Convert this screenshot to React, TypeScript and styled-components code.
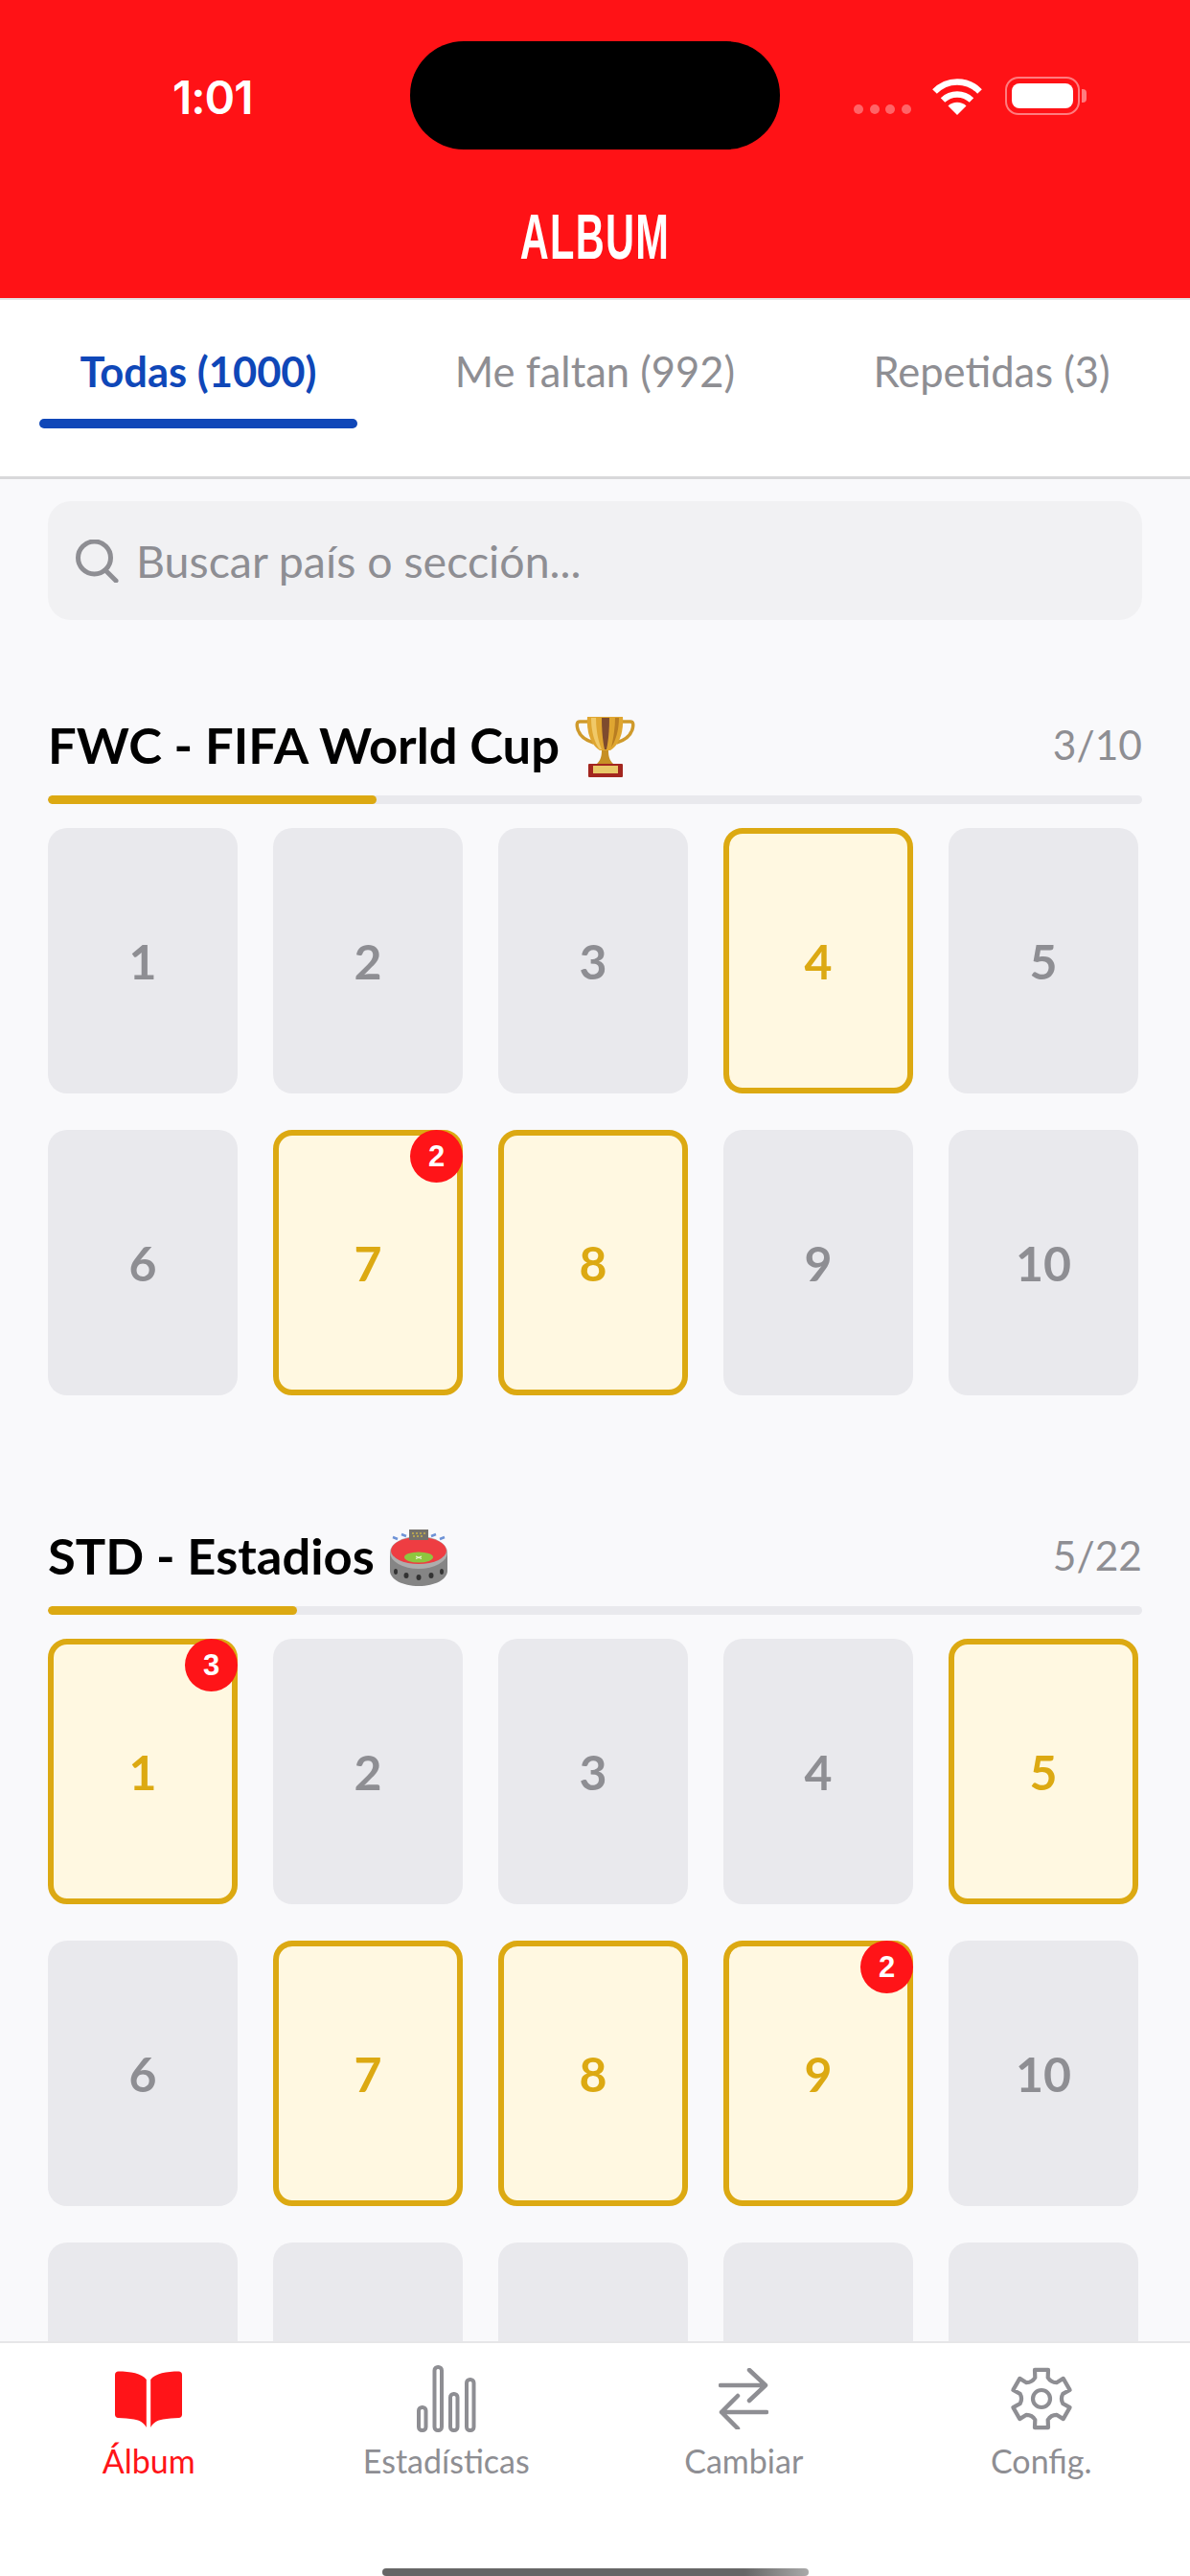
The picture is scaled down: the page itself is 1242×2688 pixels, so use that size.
import React from 'react'
import styled, { createGlobalStyle } from 'styled-components'

const GlobalStyle = createGlobalStyle`
  html, body { margin: 0; padding: 0; background: #fff; }
  * { box-sizing: border-box; }
`

const owned: Record<string, Record<number, number>> = {
  fwc: { 4: 0, 7: 2, 8: 0 },
  std: { 1: 3, 5: 0, 7: 0, 8: 0, 9: 2 },
}

// tiles: what gets drawn before the tab bar covers the list
const sections = [
  { id: 'fwc', title: 'FWC - FIFA World Cup', total: 10, got: 3, tiles: 10, icon: 'trophy' },
  { id: 'std', title: 'STD - Estadios', total: 22, got: 5, tiles: 15, icon: 'stadium' },
]

function Trophy() {
  return (
    <svg width="63" height="64" viewBox="0 0 63 64">
      <path d="M15 6H5C2 6 2 9 2.500 12c1.500 8 7 13 17 16" fill="none" stroke="#cf9a2c" strokeWidth="3.500" />
      <path d="M48 6h10c3 0 3 3 2.500 6-1.500 8-7 13-17 16" fill="none" stroke="#cf9a2c" strokeWidth="3.500" />
      <path d="M13 1h37c1 15-3 29-13 35H26C16 30 12 16 13 1z" fill="#dfa631" />
      <path d="M17 2h5c0 12 2 24 6 33h-2C20 28 17 15 17 2z" fill="#f0c968" />
      <path d="M28 2h8c0 13-1 24-3 33h-2c-2-9-3-20-3-33z" fill="#7d4b2e" />
      <path d="M42 2h4c0 12-3 23-8 31 2-9 4-20 4-31z" fill="#b87d22" />
      <path d="M28 36h7c0 6 1 10 5 14H23c4-4 5-8 5-14z" fill="#c68f24" />
      <rect x="14" y="50" width="36" height="14" rx="1" fill="#a3261f" />
      <rect x="19" y="52" width="26" height="8" fill="#e9c868" />
    </svg>
  )
}

function Stadium() {
  return (
    <svg width="60" height="60" viewBox="0 0 60 60">
      <path d="M3 9l5 2M12 6l5 2M43 8l5-2M52 11l5-2" stroke="#6f93d6" strokeWidth="2.500" />
      <path d="M0 24v20c0 9 13 16 30 16s30-7 30-16V24z" fill="#858585" />
      <ellipse cx="30" cy="25" rx="30" ry="17" fill="#adadad" />
      <ellipse cx="30" cy="23" rx="29" ry="14" fill="#ee3d42" />
      <rect x="20" y="1" width="20" height="11" fill="#74716b" />
      <path d="M23 5h14M24 8h12" stroke="#c9b24a" strokeWidth="1.500" strokeDasharray="2 2" />
      <ellipse cx="30" cy="30" rx="15" ry="5.500" fill="#8ec63f" />
      <path d="M27 29l6 2.500M33 29l-6 2.500" stroke="#eef6d5" strokeWidth="1.200" />
      <ellipse cx="6" cy="45" rx="2" ry="3" fill="#333" />
      <ellipse cx="17" cy="49" rx="2.500" ry="3" fill="#333" />
      <ellipse cx="30" cy="51" rx="2.500" ry="3" fill="#333" />
      <ellipse cx="43" cy="49" rx="2.500" ry="3" fill="#333" />
      <ellipse cx="54" cy="45" rx="2" ry="3" fill="#333" />
    </svg>
  )
}

function Wifi() {
  return (
    <svg width="52" height="39" viewBox="0 0 52 39">
      <path d="M2.500 14.500C15.500 1 36.500 1 49.500 14.500" fill="none" stroke="#fff" strokeWidth="6.500" />
      <path d="M11 23.500c8.500-8 21.500-8 30 0" fill="none" stroke="#fff" strokeWidth="6.500" />
      <path d="M26 39l-9.500-9.500c5-5 14-5 19 0z" fill="#fff" />
    </svg>
  )
}

function BookIcon() {
  return (
    <svg width="70" height="59" viewBox="0 0 70 59" fill="#ff1418">
      <path d="M32.800 9v50c-2.500-5-7-7.500-13-8.500-5-.8-11-1.300-16.500-1.500C1.500 49 0 47.500 0 45.500V4C0 2 1.500.5 3.500.5 16 .5 28 2.500 32.800 9z" />
      <path d="M37.200 9v50c2.500-5 7-7.500 13-8.500 5-.8 11-1.300 16.500-1.500 1.800 0 3.300-1.500 3.300-3.500V4c0-2-1.500-3.500-3.500-3.500C54 .5 42 2.500 37.200 9z" />
    </svg>
  )
}

function BarsIcon() {
  return (
    <svg width="62" height="70" viewBox="0 0 62 70" fill="none" stroke="#8e8e93" strokeWidth="4">
      <rect x="2" y="44" width="7.500" height="24" rx="3.500" />
      <rect x="18.500" y="2" width="7.500" height="66" rx="3.500" />
      <rect x="35" y="30" width="7.500" height="38" rx="3.500" />
      <rect x="52" y="15" width="7.500" height="53" rx="3.500" />
    </svg>
  )
}

function SwapIcon() {
  return (
    <svg width="52" height="64" viewBox="0 0 52 64" fill="none" stroke="#8e8e93" strokeWidth="4.500" strokeLinecap="round" strokeLinejoin="round">
      <path d="M2 18h47M32 2l17 16-17 16" />
      <path d="M50 46H3M20 29L3 46l17 17" />
    </svg>
  )
}

// six flat teeth, same outline all round
const gearPath = (() => {
  const pt = (r: number, deg: number) => {
    const a = (deg * Math.PI) / 180
    return `${(33 + r * Math.cos(a)).toFixed(1)} ${(33 + r * Math.sin(a)).toFixed(1)}`
  }
  let d = ''
  for (let i = 0; i < 6; i++) {
    const c = -90 + i * 60
    d += `${i === 0 ? 'M' : 'L'}${pt(23, c - 17)} L${pt(31, c - 13)} L${pt(31, c + 13)} L${pt(23, c + 17)} Q${pt(19.500, c + 30)} ${pt(23, c + 43)} `
  }
  return d + 'Z'
})()

function GearIcon() {
  return (
    <svg width="66" height="66" viewBox="0 0 66 66" fill="none" stroke="#8e8e93" strokeWidth="4.200" strokeLinejoin="round">
      <path d={gearPath} />
      <circle cx="33" cy="33" r="9" />
    </svg>
  )
}

function SearchIcon() {
  return (
    <svg width="45" height="45" viewBox="0 0 45 45" fill="none" stroke="#8e8e93" strokeWidth="5" strokeLinecap="round">
      <circle cx="19.500" cy="19" r="17" />
      <path d="M31 32l11 11" />
    </svg>
  )
}

export default function App() {
  return (
    <Page>
      <GlobalStyle />
      <Header>
        <StatusBar>
          <Time>1:01</Time>
          <Island />
          <StatusIcons>
            <Dots>
              <Dot />
              <Dot />
              <Dot />
              <Dot />
            </Dots>
            <Wifi />
            <Battery>
              <BatteryFill />
            </Battery>
          </StatusIcons>
        </StatusBar>
        <HeaderTitle>
          <span>ALBUM</span>
        </HeaderTitle>
      </Header>

      <Tabs>
        <Tab $active>Todas (1000)</Tab>
        <Tab>Me faltan (992)</Tab>
        <Tab>Repetidas (3)</Tab>
      </Tabs>

      <Content>
        <SearchBox>
          <SearchIcon />
          <SearchText>Buscar país o sección...</SearchText>
        </SearchBox>

        {sections.map((s) => (
          <Section key={s.id}>
            <SectionHead>
              <SectionTitle>
                {s.title}
                {s.icon === 'trophy' ? <Trophy /> : <Stadium />}
              </SectionTitle>
              <Count>
                {s.got}/{s.total}
              </Count>
            </SectionHead>
            <Progress>
              <ProgressFill style={{ width: `${(s.got / s.total) * 100}%` }} />
            </Progress>
            <Grid>
              {Array.from({ length: s.tiles }, (_, i) => i + 1).map((n) => {
                const has = owned[s.id][n] !== undefined
                const extra = owned[s.id][n]
                return (
                  <Sticker key={n} $has={has}>
                    {n <= 10 && n}
                    {extra > 0 && <Badge>{extra}</Badge>}
                  </Sticker>
                )
              })}
            </Grid>
          </Section>
        ))}
      </Content>

      <BottomBar>
        <NavRow>
          <NavItem $active>
            <NavIcon><BookIcon /></NavIcon>
            Álbum
          </NavItem>
          <NavItem>
            <NavIcon><BarsIcon /></NavIcon>
            Estadísticas
          </NavItem>
          <NavItem>
            <NavIcon><SwapIcon /></NavIcon>
            Cambiar
          </NavItem>
          <NavItem>
            <NavIcon><GearIcon /></NavIcon>
            Config.
          </NavItem>
        </NavRow>
        <HomeIndicator />
      </BottomBar>
    </Page>
  )
}

const Page = styled.div`
  width: 1242px;
  height: 2688px;
  display: flex;
  flex-direction: column;
  overflow: hidden;
  background: #f9f9fb;
  font-family: Lato, "Noto Sans", sans-serif;
`

const Header = styled.div`
  height: 311px;
  flex-shrink: 0;
  background: #ff1216;
  display: flex;
  flex-direction: column;
`

const StatusBar = styled.div`
  height: 199px;
  flex-shrink: 0;
  padding-top: 43px;
  display: flex;
  align-items: flex-start;
`

const Time = styled.div`
  width: 428px;
  padding: 30px 0 0 180px;
  font-family: Inter, sans-serif;
  font-weight: 600;
  font-size: 48px;
  line-height: 58px;
  letter-spacing: -1px;
  color: #fff;
`

const Island = styled.div`
  width: 386px;
  height: 113px;
  border-radius: 56px;
  background: #000;
`

const StatusIcons = styled.div`
  display: flex;
  align-items: flex-start;
  margin: 38px 0 0 77px;
`

const Dots = styled.div`
  display: flex;
  gap: 6.5px;
  margin: 28px 22px 0 0;
`

const Dot = styled.div`
  width: 10px;
  height: 10px;
  border-radius: 50%;
  background: rgba(255, 255, 255, 0.35);
`

const Battery = styled.div`
  position: relative;
  width: 78px;
  height: 40px;
  margin: -1px 0 0 24px;
  padding: 5px;
  border: 2px solid rgba(255, 255, 255, 0.45);
  border-radius: 14px;

  &::after {
    content: '';
    position: absolute;
    right: -9px;
    top: 11px;
    width: 5px;
    height: 14px;
    border-radius: 0 4px 4px 0;
    background: rgba(255, 255, 255, 0.45);
  }
`

const BatteryFill = styled.div`
  height: 100%;
  border-radius: 8px;
  background: #fff;
`

const HeaderTitle = styled.div`
  display: flex;
  justify-content: center;
  color: #fff;
  font-family: "Liberation Sans", sans-serif;
  font-weight: 700;
  font-size: 67px;
  line-height: 76px;
  margin-top: 10px;

  span {
    display: inline-block;
    letter-spacing: 2px;
    transform: scaleX(0.62);
  }
`

const Tabs = styled.div`
  height: 189px;
  flex-shrink: 0;
  display: grid;
  grid-template-columns: repeat(3, 1fr);
  padding-top: 2px;
  background: #fff;
  border-top: 2px solid #e4e4e6;
  border-bottom: 3px solid #d8d8da;
`

const Tab = styled.div<{ $active?: boolean }>`
  position: relative;
  text-align: center;
  padding-top: 46px;
  font-size: 43.5px;
  line-height: 52px;
  font-weight: ${(p) => (p.$active ? 700 : 400)};
  color: ${(p) => (p.$active ? '#0f47b8' : '#8e8e93')};

  &::after {
    content: '';
    display: ${(p) => (p.$active ? 'block' : 'none')};
    position: absolute;
    left: 41px;
    right: 41px;
    top: 122px;
    height: 10px;
    border-radius: 5px;
    background: #0f47b8;
  }
`

const Content = styled.div`
  flex: 1;
  min-height: 0;
  overflow: hidden;
  padding: 23px 50px 0;
`

const SearchBox = styled.div`
  height: 124px;
  display: flex;
  align-items: center;
  gap: 18px;
  padding: 0 32px 0 29px;
  border-radius: 24px;
  background: #f1f1f3;
`

const SearchText = styled.div`
  font-size: 46.5px;
  color: #8e8e93;
`

const Section = styled.div`
  margin-top: 100px;

  & + & {
    margin-top: 137px;
  }
`

const SectionHead = styled.div`
  height: 64px;
  padding-bottom: 5px;
  display: flex;
  align-items: center;
  justify-content: space-between;
`

const SectionTitle = styled.div`
  display: flex;
  align-items: center;
  gap: 16px;
  font-size: 52.5px;
  font-weight: 700;
  color: #000;

  svg {
    margin-top: 5px;
  }
`

const Count = styled.div`
  font-size: 42.5px;
  color: #8e8e93;
`

const Progress = styled.div`
  height: 9px;
  margin-top: 19px;
  border-radius: 5px;
  background: #e9e9ed;
  overflow: hidden;
`

const ProgressFill = styled.div`
  height: 100%;
  border-radius: 5px;
  background: #dca912;
`

const Grid = styled.div`
  display: grid;
  grid-template-columns: repeat(5, 198px);
  column-gap: 37px;
  row-gap: 38px;
  margin-top: 25px;
`

const Sticker = styled.div<{ $has: boolean }>`
  position: relative;
  height: 277px;
  display: flex;
  align-items: center;
  justify-content: center;
  border-radius: 20px;
  font-size: 50px;
  font-weight: 700;
  color: ${(p) => (p.$has ? '#dca912' : '#8e8e93')};
  background: ${(p) => (p.$has ? '#fff8e1' : '#e9e9ed')};
  border: ${(p) => (p.$has ? '6px solid #dca912' : 'none')};
`

const Badge = styled.div`
  position: absolute;
  top: -6px;
  right: -6px;
  width: 55px;
  height: 55px;
  display: flex;
  align-items: center;
  justify-content: center;
  border-radius: 50%;
  background: #ff1418;
  color: #fff;
  font-family: "Liberation Sans", sans-serif;
  font-size: 31px;
  font-weight: 700;
`

const BottomBar = styled.div`
  height: 245px;
  flex-shrink: 0;
  display: flex;
  flex-direction: column;
  background: #fff;
  border-top: 2px solid #e6e6e8;
`

const NavRow = styled.div`
  display: grid;
  grid-template-columns: repeat(4, 1fr);
  padding-top: 23px;
`

const NavItem = styled.div<{ $active?: boolean }>`
  display: flex;
  flex-direction: column;
  align-items: center;
  font-size: 34px;
  line-height: 40px;
  color: ${(p) => (p.$active ? '#ff1418' : '#8e8e93')};
`

const NavIcon = styled.div`
  height: 70px;
  margin-bottom: 10px;
  display: flex;
  align-items: center;
  justify-content: center;
`

const HomeIndicator = styled.div`
  width: 445px;
  height: 16px;
  margin: 92px auto 0;
  border-radius: 8px;
  background: linear-gradient(90deg, #666 0%, #666 85%, #aaa 100%);
`
